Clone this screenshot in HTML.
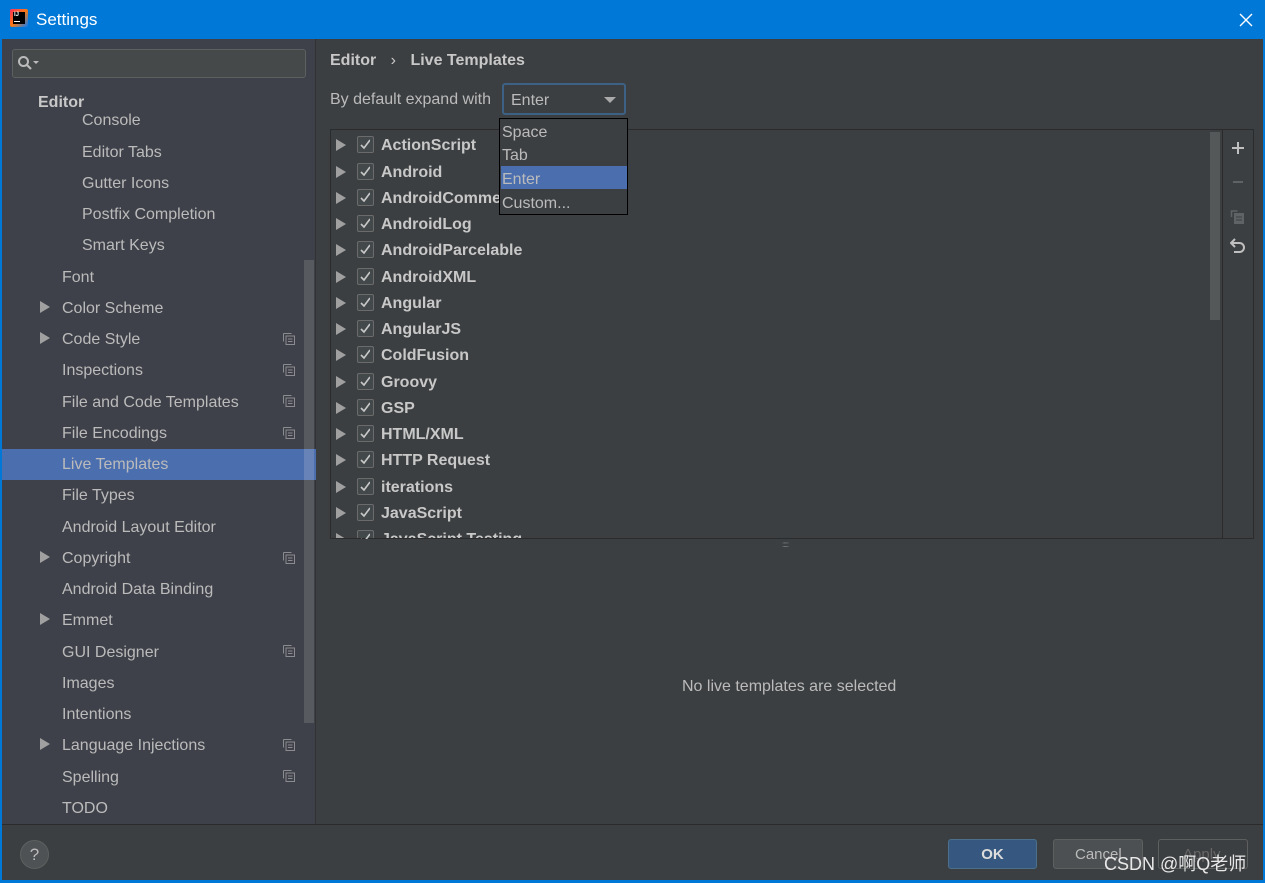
<!DOCTYPE html>
<html><head><meta charset="utf-8">
<style>
*{margin:0;padding:0;box-sizing:border-box}
body{width:1265px;height:883px;overflow:hidden;background:#3c3f41;font-family:"Liberation Sans","Noto Sans CJK SC",sans-serif;color:#bbbbbb;position:relative}
.a{position:absolute}
#title{left:0;top:0;width:1265px;height:39px;background:#0078d7;color:#fff;font-size:17px}
#left{left:2px;top:39px;width:314px;height:785px;background:#3e4149;border-right:1px solid #323232}
.ti{position:absolute;font-size:16px;color:#bbbbbb;white-space:nowrap;line-height:20px;margin-top:2px}
.arr{position:absolute;width:0;height:0;border-top:6px solid transparent;border-bottom:6px solid transparent;border-left:10px solid #a0a0a0}
.cp{position:absolute;width:12px;height:12px}
.row{position:absolute;left:0;height:26px;width:880px}
.row .t{position:absolute;left:50px;top:6px;font-size:16px;font-weight:bold;color:#c8c8c8;white-space:nowrap}
.row .ar{position:absolute;left:5px;top:8px;border-top:6px solid transparent;border-bottom:6px solid transparent;border-left:10px solid #a0a0a0}
.row .cb{position:absolute;left:26px;top:5px;width:17px;height:17px;border:1px solid #6b6b6b;border-radius:2px;background:#43494a}
</style></head><body>
<div id="title" class="a">
 <div class="a" style="left:10px;top:9px;width:18px;height:18px;background:linear-gradient(135deg,#fe315d,#f97a12 50%,#087cfa);border-radius:2px"></div>
 <div class="a" style="left:13px;top:12px;width:12px;height:12px;background:#000;color:#fff;font-size:6px;font-weight:bold;line-height:7px;padding-left:1px">IJ<div style="width:6px;height:1px;background:#fff;margin-top:2px"></div></div>
 <div class="a" style="left:36px;top:10px">Settings</div>
 <svg class="a" style="left:1239px;top:13px" width="14" height="14"><path d="M1 1L13 13M13 1L1 13" stroke="#fff" stroke-width="1.4"/></svg>
</div>
<div class="a" style="left:0;top:39px;width:2px;height:844px;background:#0078d7"></div>
<div class="a" style="left:1263px;top:39px;width:2px;height:844px;background:#0078d7"></div>
<div class="a" style="left:0;top:880px;width:1265px;height:3px;background:#0078d7"></div>

<div id="left" class="a"></div>
<div class="a" style="left:12px;top:49px;width:294px;height:29px;background:#45494a;border:1px solid #5e6060;border-radius:3px"></div>
<svg class="a" style="left:17px;top:55px" width="26" height="16"><circle cx="6.5" cy="6.5" r="4.5" fill="none" stroke="#bbb" stroke-width="2"/><path d="M10 10L14 14" stroke="#bbb" stroke-width="2.2"/><path d="M16 6h6l-3 3z" fill="#bbb"/></svg>
<div class="a" style="left:304px;top:260px;width:10px;height:463px;background:#575a5f"></div>
<div class="a" style="left:2px;top:449px;width:314px;height:31px;background:#4b6eaf"></div>
<div class="a" style="left:304px;top:449px;width:10px;height:31px;background:#6783b8"></div>

<div class="ti" style="left:38px;top:91px;font-weight:bold;color:#c8c8c8">Editor</div>
<div class="ti" style="left:82px;top:109px">Console</div>
<div class="ti" style="left:82px;top:141px">Editor Tabs</div>
<div class="ti" style="left:82px;top:172px">Gutter Icons</div>
<div class="ti" style="left:82px;top:203px">Postfix Completion</div>
<div class="ti" style="left:82px;top:234px">Smart Keys</div>
<div class="ti" style="left:62px;top:266px">Font</div>
<div class="ti" style="left:62px;top:297px">Color Scheme</div>
<div class="ti" style="left:62px;top:328px">Code Style</div>
<div class="ti" style="left:62px;top:359px">Inspections</div>
<div class="ti" style="left:62px;top:391px">File and Code Templates</div>
<div class="ti" style="left:62px;top:422px">File Encodings</div>
<div class="ti" style="left:62px;top:453px">Live Templates</div>
<div class="ti" style="left:62px;top:484px">File Types</div>
<div class="ti" style="left:62px;top:516px">Android Layout Editor</div>
<div class="ti" style="left:62px;top:547px">Copyright</div>
<div class="ti" style="left:62px;top:578px">Android Data Binding</div>
<div class="ti" style="left:62px;top:609px">Emmet</div>
<div class="ti" style="left:62px;top:641px">GUI Designer</div>
<div class="ti" style="left:62px;top:672px">Images</div>
<div class="ti" style="left:62px;top:703px">Intentions</div>
<div class="ti" style="left:62px;top:734px">Language Injections</div>
<div class="ti" style="left:62px;top:766px">Spelling</div>
<div class="ti" style="left:62px;top:797px">TODO</div>
<div class="arr" style="left:40px;top:301px"></div>
<div class="arr" style="left:40px;top:332px"></div>
<div class="arr" style="left:40px;top:551px"></div>
<div class="arr" style="left:40px;top:613px"></div>
<div class="arr" style="left:40px;top:738px"></div>
<svg width="0" height="0" style="position:absolute"><defs><g id="cpi"><path d="M0.5 0.5h8M0.5 0.5v8" stroke="#8a8c8f" fill="none"/><rect x="3" y="3" width="8.5" height="8.5" fill="none" stroke="#8a8c8f"/><path d="M5 6h4.5M5 8.5h4.5" stroke="#8a8c8f"/></g></defs></svg>
<svg class="cp" style="left:283px;top:333px"><use href="#cpi"/></svg>
<svg class="cp" style="left:283px;top:364px"><use href="#cpi"/></svg>
<svg class="cp" style="left:283px;top:395px"><use href="#cpi"/></svg>
<svg class="cp" style="left:283px;top:427px"><use href="#cpi"/></svg>
<svg class="cp" style="left:283px;top:552px"><use href="#cpi"/></svg>
<svg class="cp" style="left:283px;top:645px"><use href="#cpi"/></svg>
<svg class="cp" style="left:283px;top:739px"><use href="#cpi"/></svg>
<svg class="cp" style="left:283px;top:770px"><use href="#cpi"/></svg>

<!-- right -->
<div class="a" style="left:330px;top:52px;font-size:16px;font-weight:bold;color:#c8c8c8;white-space:nowrap">Editor <span style="font-weight:normal;margin:0 10px">›</span> Live Templates</div>
<div class="a" style="left:330px;top:91px;font-size:16px;white-space:nowrap">By default expand with</div>
<div class="a" style="left:502px;top:83px;width:124px;height:32px;border:2px solid #3d6185;border-radius:3px;background:#3c3f41"></div>
<div class="a" style="left:511px;top:92px;font-size:16px">Enter</div>
<div class="a" style="left:604px;top:97px;border-left:6px solid transparent;border-right:6px solid transparent;border-top:6px solid #aaa"></div>

<div class="a" style="left:330px;top:129px;width:924px;height:410px;border:1px solid #2b2b2b;overflow:hidden">
 <div class="a" style="left:891px;top:0;width:1px;height:410px;background:#2b2b2b"></div>
 <div class="a" style="left:879px;top:2px;width:10px;height:188px;background:#555859"></div>
 <div class="row" style="top:1px"><div class="ar"></div><div class="cb"></div><div class="t">ActionScript</div></div>
 <div class="row" style="top:28px"><div class="ar"></div><div class="cb"></div><div class="t">Android</div></div>
 <div class="row" style="top:54px"><div class="ar"></div><div class="cb"></div><div class="t">AndroidComments</div></div>
 <div class="row" style="top:80px"><div class="ar"></div><div class="cb"></div><div class="t">AndroidLog</div></div>
 <div class="row" style="top:106px"><div class="ar"></div><div class="cb"></div><div class="t">AndroidParcelable</div></div>
 <div class="row" style="top:133px"><div class="ar"></div><div class="cb"></div><div class="t">AndroidXML</div></div>
 <div class="row" style="top:159px"><div class="ar"></div><div class="cb"></div><div class="t">Angular</div></div>
 <div class="row" style="top:185px"><div class="ar"></div><div class="cb"></div><div class="t">AngularJS</div></div>
 <div class="row" style="top:211px"><div class="ar"></div><div class="cb"></div><div class="t">ColdFusion</div></div>
 <div class="row" style="top:238px"><div class="ar"></div><div class="cb"></div><div class="t">Groovy</div></div>
 <div class="row" style="top:264px"><div class="ar"></div><div class="cb"></div><div class="t">GSP</div></div>
 <div class="row" style="top:290px"><div class="ar"></div><div class="cb"></div><div class="t">HTML/XML</div></div>
 <div class="row" style="top:316px"><div class="ar"></div><div class="cb"></div><div class="t">HTTP Request</div></div>
 <div class="row" style="top:343px"><div class="ar"></div><div class="cb"></div><div class="t">iterations</div></div>
 <div class="row" style="top:369px"><div class="ar"></div><div class="cb"></div><div class="t">JavaScript</div></div>
 <div class="row" style="top:395px"><div class="ar"></div><div class="cb"></div><div class="t">JavaScript Testing</div></div>
 <svg class="a" style="left:899px;top:10px" width="16" height="120">
  <path d="M8 2v12M2 8h12" stroke="#c0c0c0" stroke-width="2"/>
  <path d="M3 42h10" stroke="#606366" stroke-width="2"/>
  <path d="M1.5 77v-6h6" stroke="#606366" fill="none" stroke-width="1.5"/><rect x="4" y="73" width="10" height="11" fill="#606366"/><path d="M6 77h6M6 80h6" stroke="#3c3f41"/>
  <path d="M5 99l-4 4 4 4M1.5 103h8a4.5 4.5 0 0 1 0 9H4" stroke="#c0c0c0" fill="none" stroke-width="2"/>
 </svg>
</div>
<!-- checkmarks -->
<svg class="a" style="left:330px;top:129px" width="40" height="410">
 <g stroke="#c8c8c8" stroke-width="1.6" fill="none">
  <path d="M31 16l3 3 6-8"/><path d="M31 43l3 3 6-8"/><path d="M31 69l3 3 6-8"/><path d="M31 95l3 3 6-8"/><path d="M31 121l3 3 6-8"/><path d="M31 148l3 3 6-8"/><path d="M31 174l3 3 6-8"/><path d="M31 200l3 3 6-8"/><path d="M31 226l3 3 6-8"/><path d="M31 253l3 3 6-8"/><path d="M31 279l3 3 6-8"/><path d="M31 305l3 3 6-8"/><path d="M31 331l3 3 6-8"/><path d="M31 358l3 3 6-8"/><path d="M31 384l3 3 6-8"/><path d="M31 410l3 3 6-8"/>
 </g>
</svg>
<div class="a" style="left:782px;top:540px;font-size:8px;color:#888;letter-spacing:-1px">:::::</div>

<!-- dropdown popup -->
<div class="a" style="left:499px;top:118px;width:129px;height:97px;background:#3c3f41;border:1px solid #000"></div>
<div class="a" style="left:501px;top:166px;width:126px;height:23px;background:#4b6eaf"></div>
<div class="a" style="left:502px;top:123px;font-size:16px;line-height:19px">Space</div>
<div class="a" style="left:502px;top:146px;font-size:16px;line-height:19px">Tab</div>
<div class="a" style="left:502px;top:170px;font-size:16px;line-height:19px">Enter</div>
<div class="a" style="left:502px;top:194px;font-size:16px;line-height:19px">Custom...</div>

<div class="a" style="left:682px;top:678px;font-size:16px;white-space:nowrap">No live templates are selected</div>

<!-- bottom -->
<div class="a" style="left:2px;top:824px;width:1261px;height:56px;background:#3c3f41;border-top:1px solid #2b2b2b"></div>
<div class="a" style="left:20px;top:840px;width:29px;height:29px;border-radius:50%;background:#4e5254;border:1px solid #5e6060;text-align:center;line-height:27px;font-size:17px;color:#bbb">?</div>
<div class="a" style="left:948px;top:839px;width:89px;height:30px;background:#365880;border:1px solid #4c708c;border-radius:3px;text-align:center;line-height:30px;font-size:15px;font-weight:bold;color:#ddd">OK</div>
<div class="a" style="left:1053px;top:839px;width:90px;height:30px;background:#4c5052;border:1px solid #5e6060;border-radius:3px;text-align:left;padding-left:21px;line-height:30px;font-size:15px;color:#bbb">Cancel</div>
<div class="a" style="left:1158px;top:839px;width:90px;height:30px;background:#3c3f41;border:1px solid #5e6060;border-radius:3px;padding-left:24px;line-height:30px;font-size:15px;color:#666">Apply</div>
<div class="a" style="left:1104px;top:850px;font-size:18px;color:#e8e8e8;white-space:nowrap">CSDN @啊Q老师</div>
</body></html>
